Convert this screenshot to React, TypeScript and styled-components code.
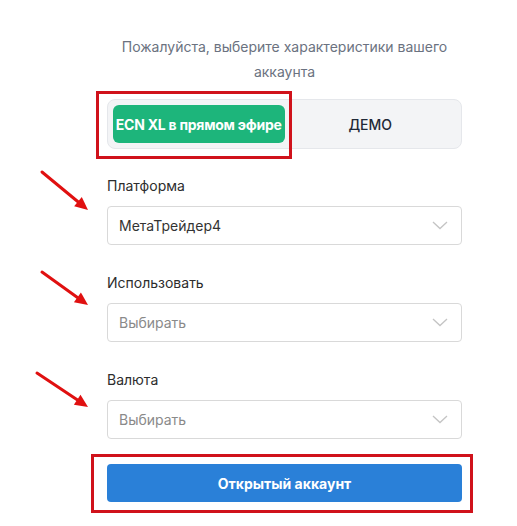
import styled, { createGlobalStyle } from "styled-components";

const GlobalStyle = createGlobalStyle`
  body {
    margin: 0;
    background: #ffffff;
    font-family: Inter, "Noto Sans", Arial, sans-serif;
  }
`;

const Page = styled.div`
  position: relative;
  width: 517px;
  height: 526px;
  overflow: hidden;
`;

const Form = styled.div`
  width: 355px;
  margin-left: 107px;
  padding-top: 34px;
  display: flex;
  flex-direction: column;
`;

const Subtitle = styled.p`
  margin: 0 0 15px;
  text-align: center;
  color: #6b7280;
  font-size: 14px;
  line-height: 25px;
`;

const Tabs = styled.div`
  position: relative;
  display: grid;
  grid-template-columns: 1fr 1fr;
  padding: 5px;
  height: 50px;
  box-sizing: border-box;
  background: #f3f4f6;
  border: 1px solid #e5e7eb;
  border-radius: 8px;
  margin-bottom: 27px;
`;

const Tab = styled.button<{ $active?: boolean }>`
  border: none;
  border-radius: 6px;
  font-family: inherit;
  font-size: 14px;
  font-weight: ${(p) => (p.$active ? 700 : 500)};
  letter-spacing: ${(p) => (p.$active ? "-0.25px" : "0")};
  color: ${(p) => (p.$active ? "#ffffff" : "#1f2937")};
  background: ${(p) => (p.$active ? "#1db57b" : "transparent")};
  padding: 0;
  white-space: nowrap;
`;

const Highlight = styled.div<{ $l: number; $t: number; $r: number; $b: number }>`
  position: absolute;
  left: ${(p) => p.$l}px;
  top: ${(p) => p.$t}px;
  right: ${(p) => p.$r}px;
  bottom: ${(p) => p.$b}px;
  border: 3px solid #d0121b;
  pointer-events: none;
`;

const Fields = styled.div`
  display: flex;
  flex-direction: column;
  gap: 28px;
  margin-bottom: 25px;
`;

const Field = styled.div`
  display: flex;
  flex-direction: column;
  gap: 10px;
`;

const Label = styled.div`
  font-size: 14px;
  line-height: 20px;
  color: #2d2d2d;
`;

const Select = styled.div<{ $placeholder?: boolean }>`
  height: 39px;
  box-sizing: border-box;
  border: 1px solid #d9d9d9;
  border-radius: 4px;
  padding: 0 13px 0 11px;
  display: flex;
  align-items: center;
  justify-content: space-between;
  font-size: 14px;
  color: ${(p) => (p.$placeholder ? "#8a8a8a" : "#333333")};
`;

const ButtonWrap = styled.div`
  position: relative;
`;

const SubmitButton = styled.button`
  width: 100%;
  height: 38px;
  border: none;
  border-radius: 4px;
  background: #2a80d8;
  color: #ffffff;
  font-family: inherit;
  font-size: 14px;
  font-weight: 700;
`;

const Arrow = styled.svg<{ $x: number; $y: number }>`
  position: absolute;
  left: ${(p) => p.$x}px;
  top: ${(p) => p.$y}px;
  overflow: visible;
`;

function Chevron() {
  return (
    <svg width="16" height="9" viewBox="0 0 16 9">
      <path d="M1 1l7 6.5L15 1" fill="none" stroke="#c4c4c4" strokeWidth="1.3" />
    </svg>
  );
}

function RedArrow({ x, y, dx, dy }: { x: number; y: number; dx: number; dy: number }) {
  const len = Math.hypot(dx, dy);
  const ux = dx / len;
  const uy = dy / len;
  const hx = dx - ux * 13;
  const hy = dy - uy * 13;
  return (
    <Arrow $x={x} $y={y} width={dx} height={dy}>
      <line x1="0" y1="0" x2={hx} y2={hy} stroke="#e01010" strokeWidth="3" strokeLinecap="round" />
      <polygon
        points={`${dx},${dy} ${hx - uy * 6},${hy + ux * 6} ${hx + uy * 6},${hy - ux * 6}`}
        fill="#e01010"
      />
    </Arrow>
  );
}

const fields = [
  { label: "Платформа", value: "МетаТрейдер4", placeholder: false },
  { label: "Использовать", value: "Выбирать", placeholder: true },
  { label: "Валюта", value: "Выбирать", placeholder: true },
];

export default function App() {
  return (
    <>
      <GlobalStyle />
      <Page>
        <Form>
          <Subtitle>
            Пожалуйста, выберите характеристики вашего
            <br />
            аккаунта
          </Subtitle>
          <Tabs>
            <Tab $active>ECN XL в прямом эфире</Tab>
            <Tab>ДЕМО</Tab>
            <Highlight $l={-12} $t={-9} $r={169} $b={-11} />
          </Tabs>
          <Fields>
            {fields.map((f) => (
              <Field key={f.label}>
                <Label>{f.label}</Label>
                <Select $placeholder={f.placeholder}>
                  {f.value}
                  <Chevron />
                </Select>
              </Field>
            ))}
          </Fields>
          <ButtonWrap>
            <SubmitButton>Открытый аккаунт</SubmitButton>
            <Highlight $l={-16} $t={-10} $r={-11} $b={-11} />
          </ButtonWrap>
        </Form>
        <RedArrow x={42} y={172} dx={46} dy={38} />
        <RedArrow x={42} y={272} dx={46} dy={33} />
        <RedArrow x={37} y={373} dx={51} dy={34} />
      </Page>
    </>
  );
}
